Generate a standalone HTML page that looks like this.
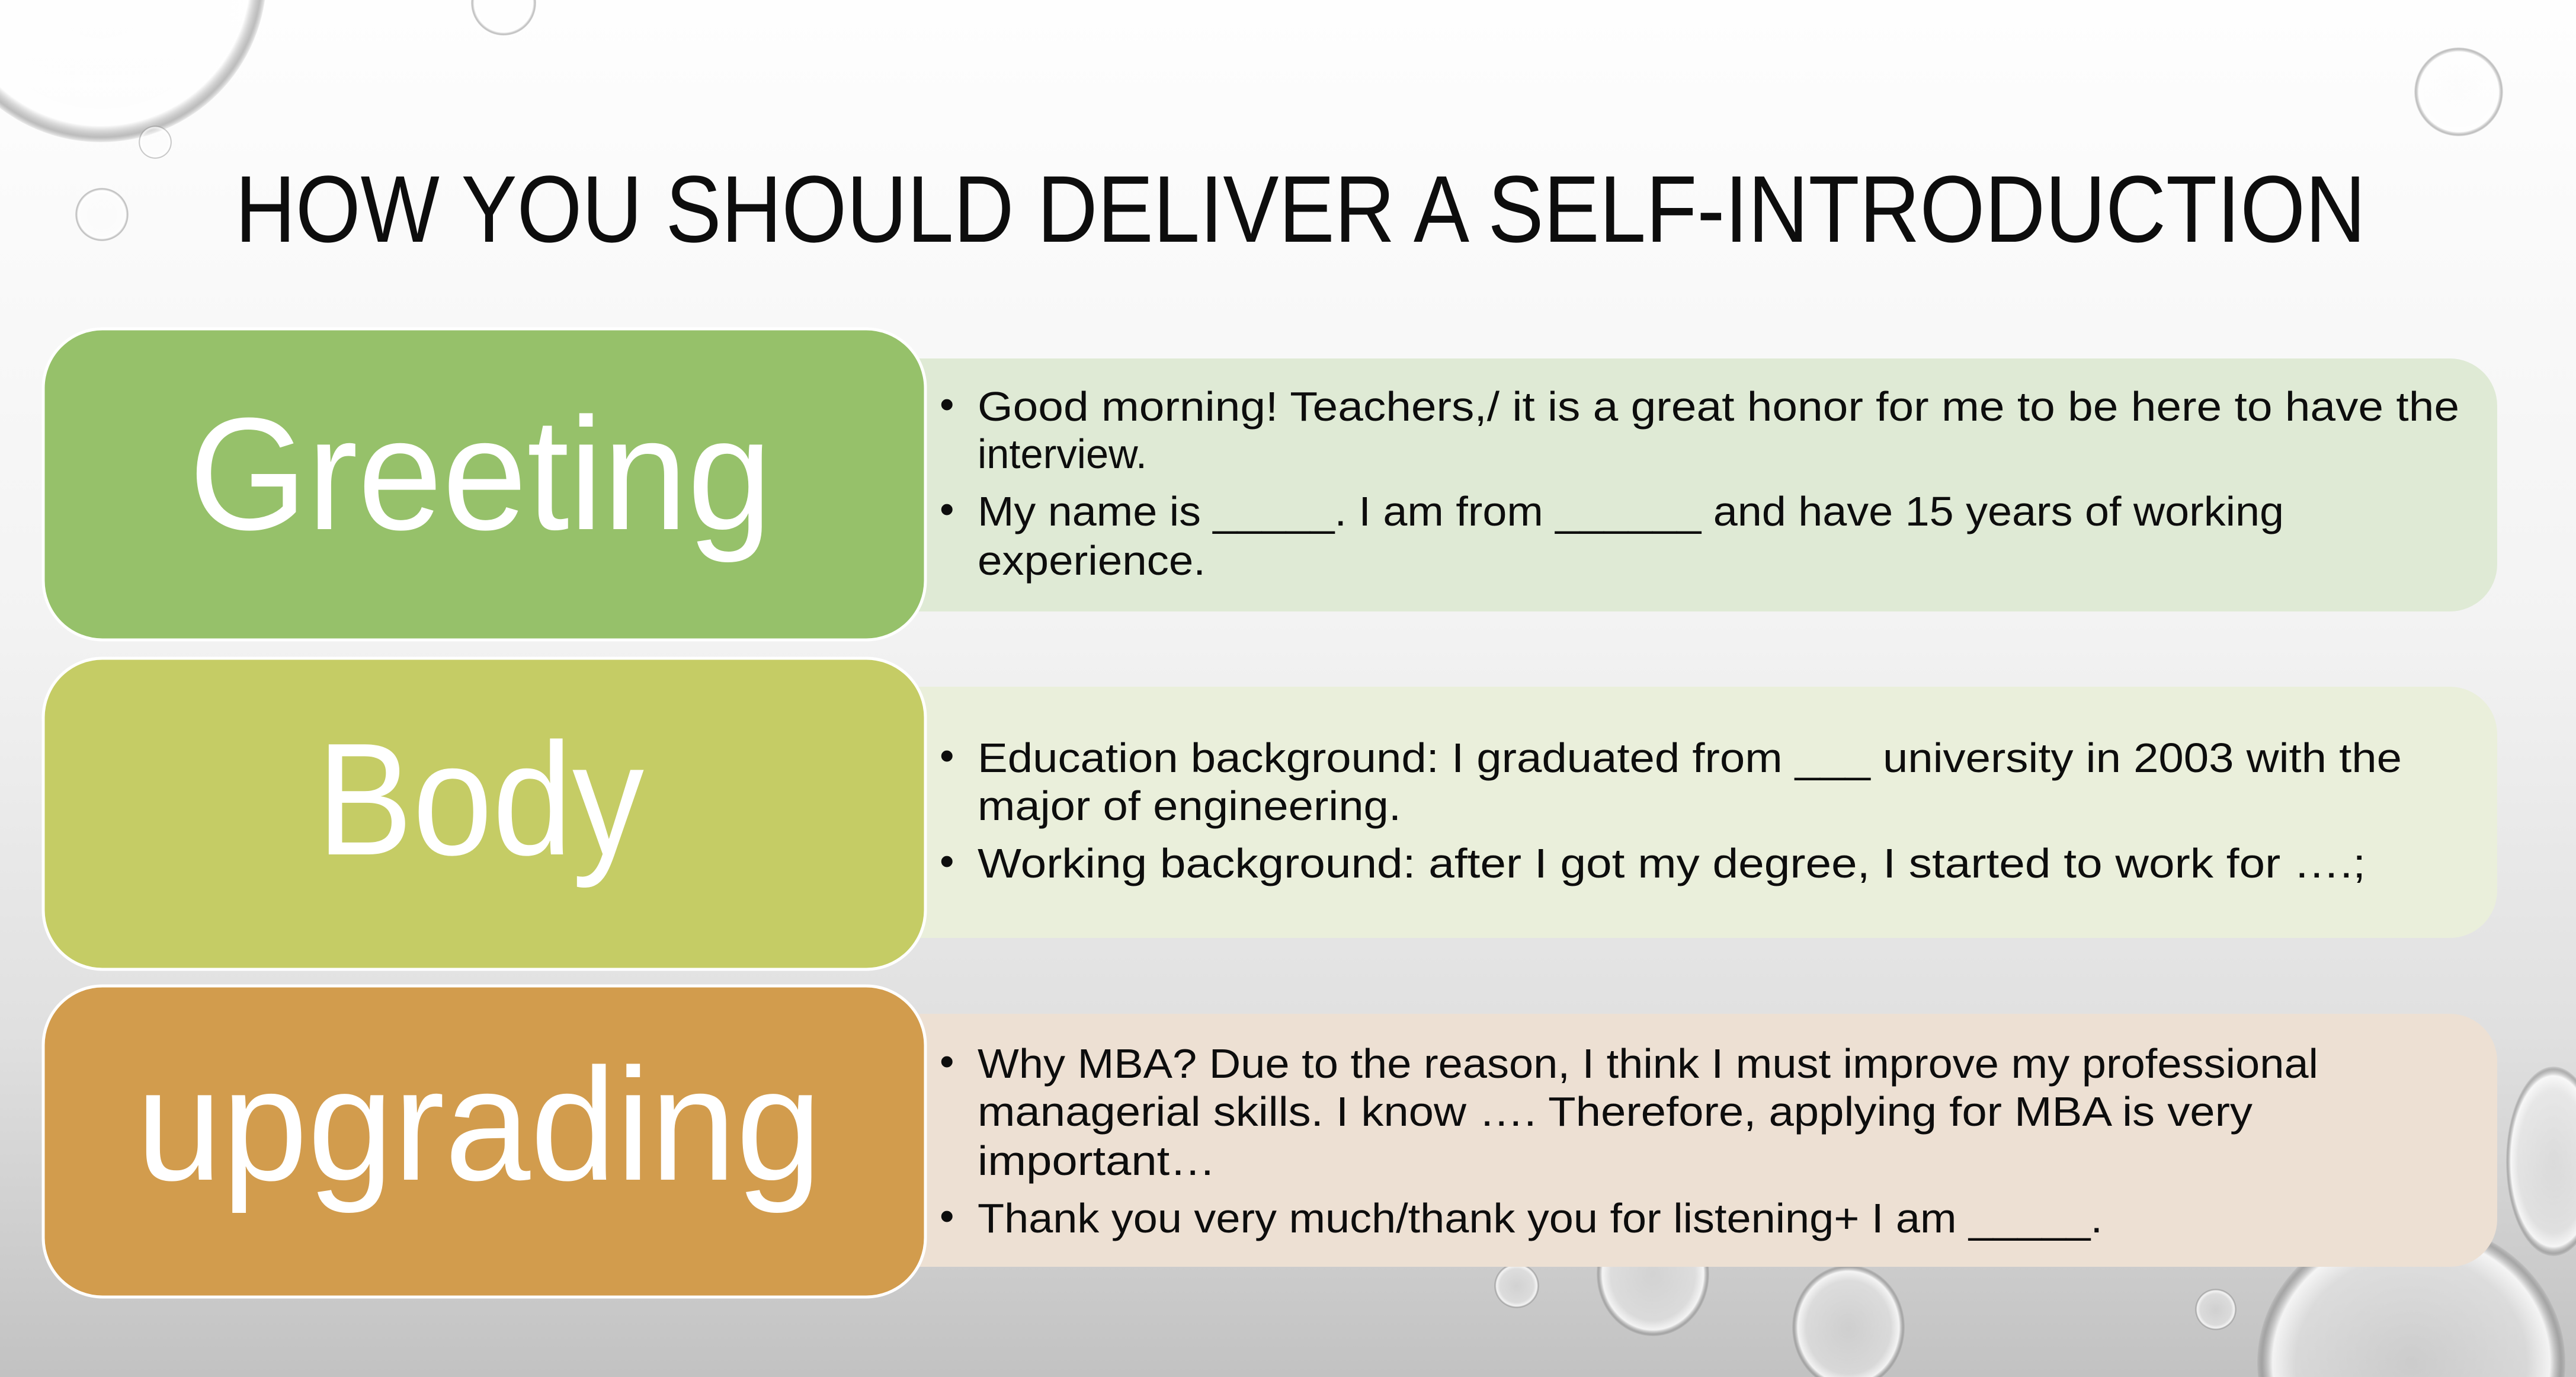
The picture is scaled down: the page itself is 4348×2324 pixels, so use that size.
<!DOCTYPE html>
<html><head><meta charset="utf-8"><style>
html,body{margin:0;padding:0;width:4348px;height:2324px;overflow:hidden}
#w{position:absolute;left:0;top:0;width:4348px;height:2324px;overflow:hidden}
svg{display:block;position:absolute;left:0;top:0}
text{font-family:"Liberation Sans",sans-serif}
</style></head><body><div id="w">
<svg width="4348" height="2324" viewBox="0 0 4348 2324" xmlns="http://www.w3.org/2000/svg">
<defs>
<linearGradient id="bg" x1="0" y1="0" x2="0" y2="1">
<stop offset="0" stop-color="#fefefe"/><stop offset="0.45" stop-color="#f3f3f3"/><stop offset="0.75" stop-color="#e0e0e0"/><stop offset="1" stop-color="#c2c2c2"/>
</linearGradient>
<radialGradient id="bub" cx="0.5" cy="0.5" r="0.5">
<stop offset="0" stop-color="#ffffff" stop-opacity="0.15"/><stop offset="0.75" stop-color="#ffffff" stop-opacity="0.35"/><stop offset="0.9" stop-color="#ffffff" stop-opacity="0.8"/><stop offset="0.97" stop-color="#888" stop-opacity="0.55"/><stop offset="1" stop-color="#666" stop-opacity="0.1"/>
</radialGradient>
</defs>
<rect width="4348" height="2324" fill="url(#bg)"/>
<!-- bubbles -->
<g>
<circle cx="170" cy="-40" r="280" fill="url(#bub)"/>
<circle cx="850" cy="5" r="55" fill="url(#bub)"/>
<circle cx="262" cy="240" r="28" fill="url(#bub)"/>
<circle cx="172" cy="362" r="45" fill="url(#bub)"/>
<circle cx="4150" cy="155" r="75" fill="url(#bub)"/>
<ellipse cx="4310" cy="1960" rx="80" ry="160" fill="url(#bub)"/>
<circle cx="2560" cy="2170" r="38" fill="url(#bub)"/>
<ellipse cx="2790" cy="2150" rx="95" ry="105" fill="url(#bub)"/>
<ellipse cx="3120" cy="2240" rx="95" ry="105" fill="url(#bub)"/>
<circle cx="3740" cy="2210" r="35" fill="url(#bub)"/>
<ellipse cx="4070" cy="2300" rx="260" ry="240" fill="url(#bub)"/>
<circle cx="4150" cy="1765" r="40" fill="url(#bub)" opacity="0.5"/>
</g>
<!-- title -->
<text x="397" y="408" font-size="160" fill="#0d0d0d" textLength="3596" lengthAdjust="spacingAndGlyphs">HOW YOU SHOULD DELIVER A SELF-INTRODUCTION</text>
<!-- panels -->
<path d="M1540 605 H4135 A80 80 0 0 1 4215 685 V952 A80 80 0 0 1 4135 1032 H1540 Z" fill="#dfead5"/>
<path d="M1540 1159 H4135 A80 80 0 0 1 4215 1239 V1503 A80 80 0 0 1 4135 1583 H1540 Z" fill="#eaefdb"/>
<path d="M1540 1711 H4135 A80 80 0 0 1 4215 1791 V2058 A80 80 0 0 1 4135 2138 H1540 Z" fill="#ede0d3"/>
<!-- label boxes -->
<rect x="73" y="555" width="1489" height="525" rx="100" fill="#96c16a" stroke="#fff" stroke-width="5"/>
<rect x="73" y="1111" width="1489" height="525" rx="100" fill="#c5cc65" stroke="#fff" stroke-width="5"/>
<rect x="73" y="1664" width="1489" height="525" rx="100" fill="#d29c4d" stroke="#fff" stroke-width="5"/>
<g fill="#fff" font-size="270">
<text x="319" y="893" textLength="984" lengthAdjust="spacingAndGlyphs">Greeting</text>
<text x="535" y="1442" textLength="552" lengthAdjust="spacingAndGlyphs">Body</text>
<text x="230" y="1991" textLength="1157" lengthAdjust="spacingAndGlyphs">upgrading</text>
</g>
<!-- bullet text -->
<g fill="#0d0d0d" font-size="70">
<text x="1586" y="706">•</text>
<text x="1650" y="710" textLength="2501" lengthAdjust="spacingAndGlyphs">Good morning! Teachers,/ it is a great honor for me to be here to have the</text>
<text x="1650" y="790" textLength="286" lengthAdjust="spacingAndGlyphs">interview.</text>
<text x="1586" y="883">•</text>
<text x="1650" y="887" textLength="2205" lengthAdjust="spacingAndGlyphs">My name is _____. I am from ______ and have 15 years of working</text>
<text x="1650" y="970" textLength="385" lengthAdjust="spacingAndGlyphs">experience.</text>

<text x="1586" y="1299">•</text>
<text x="1650" y="1303" textLength="2404" lengthAdjust="spacingAndGlyphs">Education background: I graduated from ___ university in 2003 with the</text>
<text x="1650" y="1384" textLength="715" lengthAdjust="spacingAndGlyphs">major of engineering.</text>
<text x="1586" y="1477">•</text>
<text x="1650" y="1481" textLength="2343" lengthAdjust="spacingAndGlyphs">Working background: after I got my degree, I started to work for ….;</text>

<text x="1586" y="1815">•</text>
<text x="1650" y="1819" textLength="2263" lengthAdjust="spacingAndGlyphs">Why MBA? Due to the reason, I think I must improve my professional</text>
<text x="1650" y="1900" textLength="2152" lengthAdjust="spacingAndGlyphs">managerial skills. I know …. Therefore, applying for MBA is very</text>
<text x="1650" y="1983" textLength="402" lengthAdjust="spacingAndGlyphs">important…</text>
<text x="1586" y="2076">•</text>
<text x="1650" y="2080" textLength="1899" lengthAdjust="spacingAndGlyphs">Thank you very much/thank you for listening+ I am _____.</text>
</g>
</svg>
</div></body></html>
